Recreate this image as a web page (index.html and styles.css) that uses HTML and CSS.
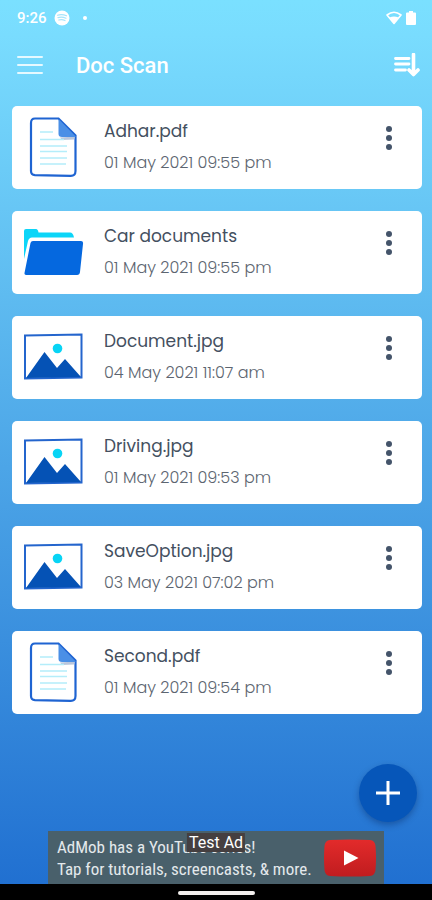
FILE: index.html
```
<!doctype html>
<html lang="en">

<head>
	<meta charset="utf-8">
	<meta name="viewport" content="width=device-width, initial-scale=1">
	<title>Doc Scan</title>
	<link rel="stylesheet" href="styles.css">
</head>

<body>
	<!-- shared icons -->
	<svg class="icon-defs" aria-hidden="true">
		<symbol id="icon-file" viewBox="0 0 60 60">
			<path d="M11 1.500H34.500L51.500 18.500V54Q51.500 59 46.500 58.800L11 58.200Q7 58 7 54V6Q7 1.500 11 1.500Z" fill="#fff" stroke="#1f64d2" stroke-width="2.200"/>
			<path d="M36 20.500L51 19.500L50 22.500L38 23Z" fill="#b9c6dc"/>
			<path d="M34.500 2V17Q34.500 20 38 20H52Z" fill="#4a8fe6"/>
			<path d="M16 15H29M16 22.500H40M16 29H43M16 34.500H43M16 41H43M16 47H42" stroke="#b4edfa" stroke-width="1.600"/>
		</symbol>
		<symbol id="icon-folder" viewBox="0 0 60 60">
			<path d="M0 37V9Q0 7 2 7H12Q14 7 14.500 10.500H46Q49 10.500 50 15.500H8Q5 15.500 4 19Z" fill="#0cd5f8"/>
			<path d="M9 19H57Q59.500 19 59 22L56 50Q55.700 53 53 53H2Q0 53 .6 50.500L6.500 21Q7 19 9 19Z" fill="#0568df"/>
		</symbol>
		<symbol id="icon-picture" viewBox="0 0 60 60">
			<path d="M1 8.500L57.500 7.500V50.500L1 51.500Z" fill="#fff" stroke="#2465cd" stroke-width="2"/>
			<path d="M2 51L20.500 25L33 41L41 32L57 50Z" fill="#0552b5"/>
			<circle cx="33.500" cy="21.500" r="4.800" fill="#08d4f5"/>
		</symbol>
		<symbol id="icon-more" viewBox="0 0 24 30">
			<g fill="#44546a">
				<circle cx="12" cy="6" r="3"/>
				<circle cx="12" cy="15" r="3"/>
				<circle cx="12" cy="24" r="3"/>
			</g>
		</symbol>
	</svg>

	<div class="status-bar">
		<span class="time">9:26</span>
		<svg class="music" width="16" height="16" viewBox="0 0 16 16">
			<circle cx="8" cy="8" r="7.500" fill="#fff"/>
			<path d="M3.500 5.200Q8 3.800 12.500 5.800M4 7.600Q8 6.500 12 8.200M4.800 10Q8 9 11 10.500" fill="none" stroke="#a5e5fc" stroke-width="1.200" stroke-linecap="round"/>
		</svg>
		<span class="dot"></span>
		<svg class="wifi" width="16" height="14" viewBox="0 0 16 14">
			<path d="M1 4Q8 -1.500 15 4L8 12.500Z" fill="none" stroke="#fff" stroke-width="1.600" stroke-linejoin="round"/>
			<path d="M3.500 6.500Q8 4.500 12.500 6.500L8 12.500Z" fill="#fff"/>
		</svg>
		<svg width="10" height="14" viewBox="0 0 10 14">
			<path d="M3 0H7V1.500H9Q10 1.500 10 2.500V13Q10 14 9 14H1Q0 14 0 13V2.500Q0 1.500 1 1.500H3Z" fill="#fff"/>
		</svg>
	</div>

	<header class="app-bar">
		<button class="icon-button" aria-label="Menu">
			<svg width="26" height="20" viewBox="0 0 26 20">
				<path d="M1 2H25M1 10H25M1 18H25" stroke="#e6f9ff" stroke-width="2" stroke-linecap="round"/>
			</svg>
		</button>
		<h1 class="title">Doc Scan</h1>
		<button class="icon-button" aria-label="Sort">
			<svg width="26" height="24" viewBox="0 0 26 24">
				<path d="M1.500 5.500H15M1.500 11H15M1.500 17H11.500" stroke="#fff" stroke-width="2.800" stroke-linecap="round"/>
				<path d="M19.500 1.500V20M15 17L19.500 21.500L24 17" fill="none" stroke="#fff" stroke-width="3.600" stroke-linecap="round" stroke-linejoin="round"/>
			</svg>
		</button>
	</header>

	<main class="content">
		<ul class="doc-list">
			<li class="doc">
				<svg class="doc-icon"><use href="#icon-file"/></svg>
				<div class="doc-text">
					<p class="doc-name">Adhar.pdf</p>
					<p class="doc-date">01 May 2021 09:55 pm</p>
				</div>
				<button class="more" aria-label="Options"><svg><use href="#icon-more"/></svg></button>
			</li>
			<li class="doc">
				<svg class="doc-icon"><use href="#icon-folder"/></svg>
				<div class="doc-text">
					<p class="doc-name">Car documents</p>
					<p class="doc-date">01 May 2021 09:55 pm</p>
				</div>
				<button class="more" aria-label="Options"><svg><use href="#icon-more"/></svg></button>
			</li>
			<li class="doc">
				<svg class="doc-icon"><use href="#icon-picture"/></svg>
				<div class="doc-text">
					<p class="doc-name">Document.jpg</p>
					<p class="doc-date">04 May 2021 11:07 am</p>
				</div>
				<button class="more" aria-label="Options"><svg><use href="#icon-more"/></svg></button>
			</li>
			<li class="doc">
				<svg class="doc-icon"><use href="#icon-picture"/></svg>
				<div class="doc-text">
					<p class="doc-name">Driving.jpg</p>
					<p class="doc-date">01 May 2021 09:53 pm</p>
				</div>
				<button class="more" aria-label="Options"><svg><use href="#icon-more"/></svg></button>
			</li>
			<li class="doc">
				<svg class="doc-icon"><use href="#icon-picture"/></svg>
				<div class="doc-text">
					<p class="doc-name">SaveOption.jpg</p>
					<p class="doc-date">03 May 2021 07:02 pm</p>
				</div>
				<button class="more" aria-label="Options"><svg><use href="#icon-more"/></svg></button>
			</li>
			<li class="doc">
				<svg class="doc-icon"><use href="#icon-file"/></svg>
				<div class="doc-text">
					<p class="doc-name">Second.pdf</p>
					<p class="doc-date">01 May 2021 09:54 pm</p>
				</div>
				<button class="more" aria-label="Options"><svg><use href="#icon-more"/></svg></button>
			</li>
		</ul>
		<button class="add" aria-label="Add">
			<svg width="26" height="26" viewBox="0 0 26 26">
				<path d="M13 1V25M1 13H25" stroke="#fff" stroke-width="3"/>
			</svg>
		</button>
	</main>

	<div class="ad">
		<p class="ad-text">AdMob has a YouTube series!<br>Tap for tutorials, screencasts, &amp; more.</p>
		<svg class="ad-logo" width="52" height="38" viewBox="0 0 52 38">
			<defs>
				<linearGradient id="red" x1="0" y1="0" x2="0" y2="1">
					<stop offset="0" stop-color="#e32b2b"/>
					<stop offset="1" stop-color="#c01c1f"/>
				</linearGradient>
			</defs>
			<path d="M6 1Q26 0 46 1Q51 1.500 51.500 7Q52.500 19 51.500 31Q51 36.500 46 37Q26 38 6 37Q1 36.500 .5 31Q-.5 19 .5 7Q1 1.500 6 1Z" fill="url(#red)"/>
			<path d="M20 11.500L34.500 19L20 26.500Z" fill="#fff"/>
		</svg>
		<span class="ad-label">Test Ad</span>
	</div>

	<div class="nav-bar"><span class="nav-pill"></span></div>
</body>

</html>
```
FILE: styles.css
```
* {
	box-sizing: border-box;
}
body {
	margin: 0;
	min-height: 100vh;
	display: flex;
	flex-direction: column;
	background: linear-gradient(#7ae0ff, #79dcfe 4%, #1f6ed0);
	font-family: Roboto, sans-serif;
	color: #fff;
}
h1, p, ul {
	margin: 0;
	padding: 0;
}
button {
	display: flex;
	align-items: center;
	justify-content: center;
	padding: 0;
	border: none;
	background: none;
	cursor: pointer;
}
.icon-defs {
	position: absolute;
	width: 0;
	height: 0;
}

.status-bar {
	display: flex;
	align-items: center;
	height: 36px;
	padding: 0 16px 0 17px;
}
.time {
	font-size: 15px;
	font-weight: 500;
}
.music {
	margin-left: 7px;
}
.dot {
	width: 4px;
	height: 4px;
	margin-left: 13px;
	border-radius: 50%;
	background: #fff;
}
.wifi {
	margin-left: auto;
	margin-right: 4px;
}

.app-bar {
	display: flex;
	align-items: center;
	height: 58px;
	padding: 0 12px 0 17px;
}
.title {
	flex: 1;
	margin-left: 33px;
	font-size: 22px;
	font-weight: 500;
}

.content {
	position: relative;
	flex: 1;
	padding: 12px 10px 24px 12px;
}
.doc-list {
	display: flex;
	flex-direction: column;
	gap: 22px;
	list-style: none;
}
.doc {
	display: flex;
	align-items: flex-start;
	height: 83px;
	padding: 9px 21px 8px 12px;
	border-radius: 5px;
	background: #fff;
}
.doc-icon {
	width: 60px;
	height: 60px;
	margin-top: 2px;
}
.doc-text {
	flex: 1;
	margin-left: 20px;
	font-family: Poppins, Inter, sans-serif;
	line-height: 32px;
}
.doc-name {
	font-size: 17px;
	color: #44505f;
}
.doc-date {
	font-size: 16px;
	font-weight: 300;
	color: #5c6570;
}
.more {
	height: 32px;
	margin-top: 7px;
}
.more svg {
	width: 24px;
	height: 30px;
}

.add {
	position: absolute;
	right: 15px;
	bottom: 9px;
	width: 58px;
	height: 58px;
	border-radius: 50%;
	background: #0656b9;
	box-shadow: 0 3px 6px rgba(0, 30, 80, 0.35);
}

.ad {
	position: relative;
	display: flex;
	align-items: center;
	justify-content: space-between;
	align-self: center;
	width: 336px;
	height: 53px;
	padding: 0 8px 0 9px;
	background: #49606b;
}
.ad-text {
	font-family: "Roboto Condensed", Roboto, sans-serif;
	font-size: 17px;
	line-height: 22px;
	white-space: nowrap;
	color: #e4e9ec;
}
.ad-logo {
	flex: none;
}
.ad-label {
	position: absolute;
	top: 2px;
	left: 50%;
	transform: translateX(-50%);
	padding: 0 2px;
	background: #453f40;
	font-size: 16px;
	line-height: 19px;
	white-space: nowrap;
}

.nav-bar {
	display: flex;
	align-items: center;
	justify-content: center;
	height: 16px;
	padding-top: 2px;
	background: #000;
}
.nav-pill {
	width: 77px;
	height: 4px;
	border-radius: 2px;
	background: #f3f0ee;
}
```
